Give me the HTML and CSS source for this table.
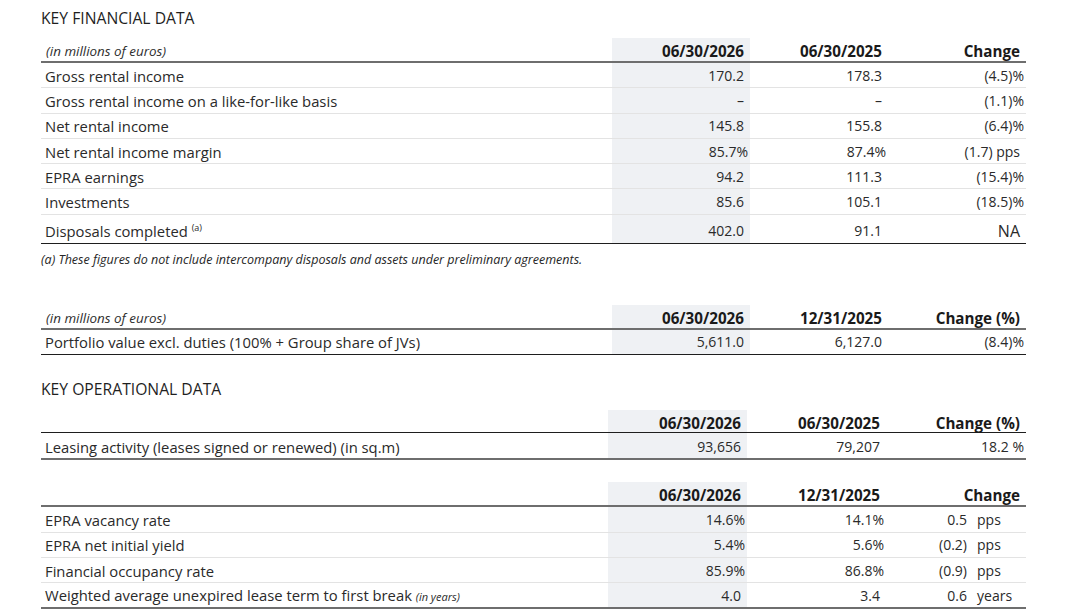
FILE: index.html
```html
<!DOCTYPE html>
<html lang="en">
<head>
<meta charset="utf-8">
<title>Key financial data</title>
<link rel="stylesheet" href="styles.css">
</head>
<body>
<div class="page">
  <h2 class="section-title">KEY FINANCIAL DATA</h2>

  <table class="data t-fin">
    <colgroup><col class="c-label"><col class="c-val"><col class="c-val"><col class="c-chg"></colgroup>
    <thead>
      <tr><th class="unit">(in millions of euros)</th><th class="shade">06/30/2026</th><th>06/30/2025</th><th>Change</th></tr>
    </thead>
    <tbody>
      <tr><td>Gross rental income</td><td class="shade">170.2</td><td>178.3</td><td>(4.5)<span class="pct">%</span></td></tr>
      <tr><td>Gross rental income on a like-for-like basis</td><td class="shade">–</td><td>–</td><td>(1.1)<span class="pct">%</span></td></tr>
      <tr><td>Net rental income</td><td class="shade">145.8</td><td>155.8</td><td>(6.4)<span class="pct">%</span></td></tr>
      <tr><td>Net rental income margin</td><td class="shade">85.7<span class="pct">%</span></td><td>87.4<span class="pct">%</span></td><td>(1.7) pps</td></tr>
      <tr><td>EPRA earnings</td><td class="shade">94.2</td><td>111.3</td><td>(15.4)<span class="pct">%</span></td></tr>
      <tr><td>Investments</td><td class="shade">85.6</td><td>105.1</td><td>(18.5)<span class="pct">%</span></td></tr>
      <tr class="last"><td>Disposals completed <sup>(a)</sup></td><td class="shade">402.0</td><td>91.1</td><td class="na">NA</td></tr>
    </tbody>
  </table>
  <p class="footnote">(a) These figures do not include intercompany disposals and assets under preliminary agreements.</p>

  <table class="data t-port">
    <colgroup><col class="c-label"><col class="c-val"><col class="c-val"><col class="c-chg"></colgroup>
    <thead>
      <tr><th class="unit">(in millions of euros)</th><th class="shade">06/30/2026</th><th>12/31/2025</th><th>Change (%)</th></tr>
    </thead>
    <tbody>
      <tr class="last"><td>Portfolio value excl. duties (100% + Group share of JVs)</td><td class="shade">5,611.0</td><td>6,127.0</td><td>(8.4)<span class="pct">%</span></td></tr>
    </tbody>
  </table>

  <h2 class="section-title op">KEY OPERATIONAL DATA</h2>

  <table class="data narrow t-lease">
    <colgroup><col class="c-label"><col class="c-val"><col class="c-val"><col class="c-chg"></colgroup>
    <thead>
      <tr><th class="unit"></th><th class="shade">06/30/2026</th><th>06/30/2025</th><th>Change (%)</th></tr>
    </thead>
    <tbody>
      <tr class="last"><td>Leasing activity (leases signed or renewed) (in sq.m)</td><td class="shade">93,656</td><td>79,207</td><td>18.2 <span class="pct">%</span></td></tr>
    </tbody>
  </table>

  <table class="data narrow t-ops">
    <colgroup><col class="c-label"><col class="c-val"><col class="c-val"><col class="c-chg"></colgroup>
    <thead>
      <tr><th class="unit"></th><th class="shade">06/30/2026</th><th>12/31/2025</th><th>Change</th></tr>
    </thead>
    <tbody>
      <tr><td>EPRA vacancy rate</td><td class="shade">14.6<span class="pct">%</span></td><td>14.1<span class="pct">%</span></td><td class="split"><span class="n">0.5</span><span class="u">pps</span></td></tr>
      <tr><td>EPRA net initial yield</td><td class="shade">5.4<span class="pct">%</span></td><td>5.6<span class="pct">%</span></td><td class="split"><span class="n">(0.2)</span><span class="u">pps</span></td></tr>
      <tr><td>Financial occupancy rate</td><td class="shade">85.9<span class="pct">%</span></td><td>86.8<span class="pct">%</span></td><td class="split"><span class="n">(0.9)</span><span class="u">pps</span></td></tr>
      <tr class="last"><td>Weighted average unexpired lease term to first break <em class="small-it">(in years)</em></td><td class="shade">4.0</td><td>3.4</td><td class="split"><span class="n">0.6</span><span class="u">years</span></td></tr>
    </tbody>
  </table>
</div>
</body>
</html>
```

FILE: styles.css
```css
html, body {
  margin: 0;
  padding: 0;
  background: #ffffff;
}

body {
  font-family: "Open Sans", "Liberation Sans", sans-serif;
  color: #262626;
  font-size: 14px;
}

.page {
  width: 985px;
  padding-left: 41px;
}

.section-title {
  margin: 0;
  padding-top: 8px;
  font-size: 15.7px;
  font-weight: 400;
  line-height: 20px;
  color: #1f1f1f;
}

.section-title.op {
  padding-top: 0;
  margin-top: 24px;
}

.data {
  width: 985px;
  border-collapse: collapse;
  table-layout: fixed;
  margin-top: 10px;
}

.data col.c-label { width: 571px; }
.data col.c-val { width: 138px; }
.data col.c-chg { width: 138px; }

.data.narrow col.c-label { width: 567px; }
.data.narrow col.c-val { width: 139px; }
.data.narrow col.c-chg { width: 140px; }

.data th {
  height: 22px;
  padding: 0 6px 1px 0;
  vertical-align: bottom;
  text-align: right;
  font-weight: 700;
  font-size: 15.2px;
  line-height: 18px;
  color: #1a1a1a;
  border-bottom: 2px solid #6e6e6e;
}

.data th.unit {
  text-align: left;
  padding-left: 5px;
  font-weight: 400;
  font-style: italic;
  font-size: 13.4px;
  color: #2e2e2e;
}

.data td {
  height: 23.3px;
  padding: 1px 6px 0 0;
  text-align: right;
  vertical-align: middle;
  line-height: 18px;
  color: #2a2a2a;
  border-bottom: 1px solid #e3e3e3;
  white-space: nowrap;
}

.data td:first-child {
  text-align: left;
  padding-left: 4px;
  font-size: 14.8px;
}

.data tr.last td {
  border-bottom: 1.5px solid #1e1e1e;
}

.t-fin tr.last td {
  height: 24px;
  padding-bottom: 3px;
  vertical-align: bottom;
}

.shade {
  background: #eff1f4;
}

.pct {
  margin-right: -4px;
}

sup {
  font-size: 9px;
  line-height: 0;
  vertical-align: 6px;
}

.na {
  font-size: 16px;
}

.footnote {
  margin: 8px 0 0 0;
  font-size: 12.5px;
  line-height: 16px;
  font-style: italic;
  color: #262626;
}

.t-port {
  margin-top: 37px;
}

.t-port tr.last td {
  height: 23px;
}

.t-lease {
  margin-top: 11px;
}

.t-lease th {
  height: 22px;
  padding-bottom: 0;
  border-bottom: 1.5px solid #1e1e1e;
}

.t-lease tr.last td {
  height: 23.5px;
  padding-top: 0;
  padding-bottom: 2px;
  vertical-align: bottom;
  border-bottom: 2px solid #6e6e6e;
}

.t-ops {
  margin-top: 22px;
}

.t-ops th {
  height: 22px;
  padding-bottom: 1px;
}

.t-ops tr.last td {
  border-bottom: 2px solid #6e6e6e;
}

.data td.split {
  padding-right: 0;
}

.split .n {
  display: inline-block;
  text-align: right;
  margin-right: 10px;
}

.split .u {
  display: inline-block;
  width: 49px;
  text-align: left;
}

.small-it {
  font-size: 11px;
  font-style: italic;
}
```
